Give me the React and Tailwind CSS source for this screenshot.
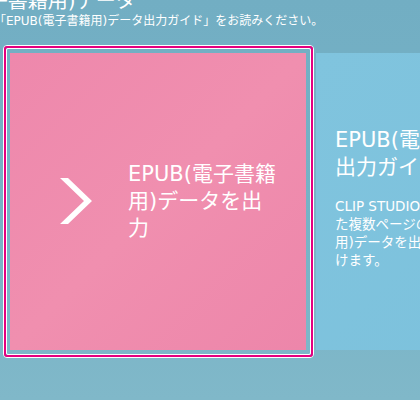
import React from 'react';

const font = "font-['DejaVu_Sans','Noto_Sans_CJK_JP',sans-serif]";

export default function App() {
  return (
    <div className={`relative h-[400px] w-full overflow-hidden bg-gradient-to-b from-[#72aec3] via-[#76b2c6] to-[#80b8c9] text-white ${font}`}>
      {/* Header */}
      <div className="mt-[-10px] whitespace-nowrap">
        <h1 className="ml-[-93px] text-[20px] leading-[22px] font-normal">EPUB(電子書籍用)データ</h1>
        <p className="ml-[-6px] text-[12px] leading-[18px]">「EPUB(電子書籍用)データ出力ガイド」をお読みください。</p>
      </div>

      {/* Tiles */}
      <div className="mt-[23px] flex gap-[10px] pl-[10px]">
        <div className="relative shrink-0">
          <div className="flex h-[297px] w-[296px] items-center bg-gradient-to-br from-[#ee88ac] via-[#f08faf] to-[#ed86aa] pl-[50px]">
            <svg width="34" height="48" viewBox="0 0 34 48" className="shrink-0">
              <polygon points="0,0 8,0 32,23 8,46 0,46 24,23" fill="#ffffff" />
            </svg>
            <p className="ml-[34px] whitespace-nowrap text-[21px] leading-[27px]">
              EPUB(電子書籍
              <br />
              用)データを出
              <br />
              力
            </p>
          </div>
          {/* selection frame */}
          <div className="pointer-events-none absolute top-[-8px] left-[-7px] right-[-8px] bottom-[-8px] rounded-[4px] border border-white">
            <div className="h-full w-full rounded-[3px] border-2 border-[#e4007f]">
              <div className="h-full w-full rounded-[2px] border border-white"></div>
            </div>
          </div>
        </div>

        <div className="flex h-[297px] w-[296px] shrink-0 flex-col justify-center bg-gradient-to-br from-[#80c4de] to-[#7cc1dc] pl-[19px]">
          <div className="mb-[7px] whitespace-nowrap">
            <h2 className="text-[21px] leading-[27px] font-normal">
              EPUB(電子書籍用)データ
              <br />
              出力ガイド
            </h2>
            <p className="mt-[16px] text-[13.5px] leading-[18px]">
              CLIP STUDIO PAINT EXで作成し
              <br />
              た複数ページの作品から、EPUB(電子書籍
              <br />
              用)データを出力する方法をご覧いただ
              <br />
              けます。
            </p>
          </div>
        </div>
      </div>
    </div>
  );
}
